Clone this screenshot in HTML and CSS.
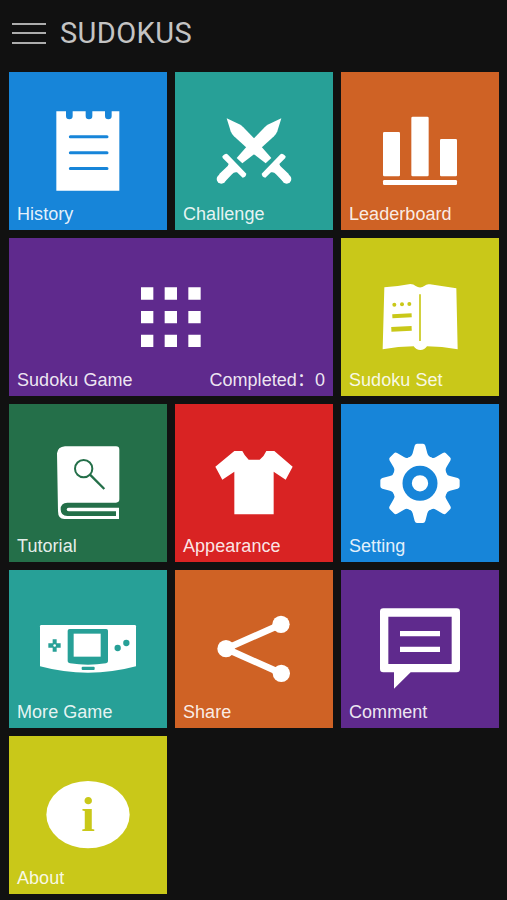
FILE: index.html
```html
<!DOCTYPE html>
<html lang="en">

<head>
  <meta charset="UTF-8">
  <meta name="viewport" content="width=device-width, initial-scale=1.0">
  <title>Sudokus</title>
  <link rel="stylesheet" href="styles.css">
</head>

<body>
  <header>
    <div class="menu-button">
      <span></span>
      <span></span>
      <span></span>
    </div>
    <h1>SUDOKUS</h1>
  </header>

  <main class="tiles">
    <div class="tile blue">
      <svg class="icon" viewBox="27 21 474 384">
        <path fill="#fff" d="M169 139H198V153A10 10 0 0 0 218 153V139H257V153A10 10 0 0 0 277 153V139H315V153A10 10 0 0 0 335 153V139H358V377H169Z"/>
        <path class="cut" stroke-width="9" stroke-linecap="round" d="M211 215.500H321M211 263.500H321M211 310.500H321"/>
      </svg>
      <p class="label">History</p>
    </div>

    <div class="tile teal">
      <svg class="icon" viewBox="15 21 474 384">
        <defs>
          <g id="sword">
            <path d="M170 160L208 178Q214 181 220 187L252 220L304 279L287 295L248 265L192 214Q185 207 182 199Z"/>
            <path d="M330 269Q337 261 347 274L346 279L328 297Q330 305 338 310L357 328L338 349L318 328Q312 320 303 322L286 338Q276 336 275 326Z"/>
            <circle cx="350" cy="342" r="14"/>
          </g>
        </defs>
        <g fill="#fff">
          <use href="#sword"/>
          <use href="#sword" transform="translate(504 0) scale(-1 1)"/>
        </g>
      </svg>
      <p class="label">Challenge</p>
    </div>

    <div class="tile orange">
      <svg class="icon" viewBox="18 21 474 384">
        <g fill="#fff">
          <rect x="144" y="201" width="51" height="133" rx="4"/>
          <rect x="229" y="155" width="52" height="179" rx="4"/>
          <rect x="315" y="222" width="51" height="112" rx="4"/>
          <rect x="144" y="345" width="222" height="15" rx="4"/>
        </g>
      </svg>
      <p class="label">Leaderboard</p>
    </div>

    <div class="tile wide purple">
      <svg class="icon" viewBox="-333 -96 972 384">
        <path fill="#fff" d="M63 52h37v37h-37zM134 52h37v37h-37zM205 52h37v37h-37zM63 123h37v37h-37zM134 123h37v37h-37zM205 123h37v37h-37zM63 194h37v37h-37zM134 194h37v37h-37zM205 194h37v37h-37z"/>
      </svg>
      <p class="label">Sudoku Game <span>Completed：0</span></p>
    </div>

    <div class="tile yellow">
      <svg class="icon" viewBox="18 9 474 384">
        <path fill="#fff" d="M148 157Q190 154 226 147Q236 147 242 153Q256 162 269 152Q275 146 285 148L364 160L368 343Q320 334 276 334Q269 345 256 345Q243 345 236 334Q190 334 143 343Z"/>
        <path class="cut" stroke-width="5" d="M255 178V318"/>
        <path class="cut" stroke-width="12" d="M172 244L230 241"/>
        <path class="cut" stroke-width="14" d="M169 283L230 280"/>
        <circle class="solid" cx="178" cy="209" r="6"/>
        <circle class="solid" cx="201" cy="208" r="6"/>
        <circle class="solid" cx="223" cy="207" r="6"/>
      </svg>
      <p class="label">Sudoku Set</p>
    </div>

    <div class="tile green">
      <svg class="icon" viewBox="27 12 474 384">
        <path fill="#fff" d="M195 139H348Q358 139 358 149V298Q358 308 348 308H202Q182 308 182 328Q182 348 202 348H348V334H206Q200 334 200 328.500Q200 323 206 323H357V357H193Q174 357 174 333L171 160Q173 141 195 139Z"/>
        <circle class="cut" cx="251" cy="206" r="26" stroke-width="6"/>
        <path class="cut" stroke-width="7" d="M270 224L313 267"/>
      </svg>
      <p class="label">Tutorial</p>
    </div>

    <div class="tile red">
      <svg class="icon" viewBox="15 12 474 384">
        <path fill="#fff" d="M193 153H217Q223 167 236 179H269Q283 168 289 153H313L368 200L347 239L311 215V343H193V215L157 239L136 200Z"/>
      </svg>
      <p class="label">Appearance</p>
    </div>

    <div class="tile blue">
      <svg class="icon" viewBox="18 12 474 384">
        <defs>
          <path id="tooth" d="M221 173L226 170Q231 168 233 160L239 137Q241 131 246 131H264Q269 131 271 137L277 160Q279 168 284 170L289 173Z"/>
        </defs>
        <g fill="#fff">
          <circle cx="255" cy="250" r="85"/>
          <use href="#tooth"/>
          <use href="#tooth" transform="rotate(45 255 250)"/>
          <use href="#tooth" transform="rotate(90 255 250)"/>
          <use href="#tooth" transform="rotate(135 255 250)"/>
          <use href="#tooth" transform="rotate(180 255 250)"/>
          <use href="#tooth" transform="rotate(225 255 250)"/>
          <use href="#tooth" transform="rotate(270 255 250)"/>
          <use href="#tooth" transform="rotate(315 255 250)"/>
        </g>
        <circle class="cut" cx="255" cy="250" r="38.500" stroke-width="28"/>
      </svg>
      <p class="label">Setting</p>
    </div>

    <div class="tile teal">
      <svg class="icon" viewBox="27 15 474 384">
        <path fill="#fff" d="M124 180H404Q408 180 408 184V304Q338 323 264 323Q190 323 120 304V184Q120 180 124 180Z"/>
        <path class="solid" d="M209 192H319Q324 192 324 197V289Q324 294 318 295Q264 303 210 295Q203 294 203 289V197Q203 192 209 192Z"/>
        <rect x="221" y="206" width="81" height="69" fill="#fff"/>
        <path class="solid" d="M158 223h12v12h12v13h-12v12h-12v-12h-13v-13h13z"/>
        <circle cx="164" cy="241.500" r="4" fill="#fff"/>
        <circle class="solid" cx="353" cy="249" r="9.500"/>
        <circle class="solid" cx="379" cy="234" r="9.500"/>
        <rect class="solid" x="245" y="305" width="39" height="10" rx="3"/>
      </svg>
      <p class="label">More Game</p>
    </div>

    <div class="tile orange">
      <svg class="icon" viewBox="15 15 474 384">
        <path fill="none" stroke="#fff" stroke-width="20" d="M333 178L168 251L334 325"/>
        <circle cx="333" cy="178" r="26" fill="#fff"/>
        <circle cx="168" cy="251" r="26" fill="#fff"/>
        <circle cx="334" cy="325" r="26" fill="#fff"/>
      </svg>
      <p class="label">Share</p>
    </div>

    <div class="tile purple">
      <svg class="icon" viewBox="513 15 474 384">
        <path fill="#fff" fill-rule="evenodd" d="M640 130H860Q870 130 870 140V312Q870 322 860 322H722L672 371V322H640Q630 322 630 312V140Q630 130 640 130ZM655 155V297H845V155Z"/>
        <path stroke="#fff" stroke-width="16" d="M690 206H810M690 253H810"/>
      </svg>
      <p class="label">Comment</p>
    </div>

    <div class="tile yellow">
      <svg class="icon" viewBox="27 18 474 384">
        <ellipse cx="264" cy="254" rx="125" ry="101" fill="#fff"/>
        <text class="info" x="264" y="302" text-anchor="middle">i</text>
      </svg>
      <p class="label">About</p>
    </div>
  </main>
</body>

</html>
```

FILE: styles.css
```css
body {
  margin: 0;
  min-height: 900px;
  font-family: "Liberation Sans", Arial, "Noto Sans CJK SC", sans-serif;
  background-color: #111111;
  color: #ffffff;
}

header {
  display: flex;
  align-items: center;
  height: 66px;
  padding-left: 12px;
  margin-bottom: 6px;
}

header h1 {
  margin: 0 0 0 14px;
  font-family: Roboto, "Liberation Sans", sans-serif;
  font-size: 29px;
  font-weight: 400;
  letter-spacing: 0.4px;
  line-height: 34px;
  color: #c4c4c4;
}

.menu-button {
  display: flex;
  flex-direction: column;
  justify-content: space-between;
  width: 34px;
  height: 21px;
}

.menu-button span {
  height: 2px;
  background: #adadad;
}

.tiles {
  display: grid;
  grid-template-columns: repeat(3, 158px);
  grid-auto-rows: 158px;
  gap: 8px;
  padding-left: 9px;
}

.tile {
  display: flex;
  flex-direction: column;
  background: var(--tile);
}

.wide {
  grid-column: span 2;
}

.icon {
  display: block;
  width: 100%;
  height: 128px;
}

.label {
  display: flex;
  justify-content: space-between;
  margin: 0;
  padding: 0 8px;
  font-size: 18px;
  letter-spacing: 0.05px;
  line-height: 28px;
  color: rgba(255, 255, 255, 0.9);
}

/* parts of an icon that show the tile colour */
.cut {
  fill: none;
  stroke: var(--tile);
}

.solid {
  fill: var(--tile);
}

.info {
  font-family: "Liberation Serif", serif;
  font-size: 148px;
  font-weight: bold;
  fill: var(--tile);
}

.blue {
  --tile: #1785d9;
}

.teal {
  --tile: #27a097;
}

.orange {
  --tile: #cf6225;
}

.purple {
  --tile: #5f2a8d;
}

.yellow {
  --tile: #c9c819;
}

.green {
  --tile: #246f49;
}

.red {
  --tile: #d92323;
}
```
